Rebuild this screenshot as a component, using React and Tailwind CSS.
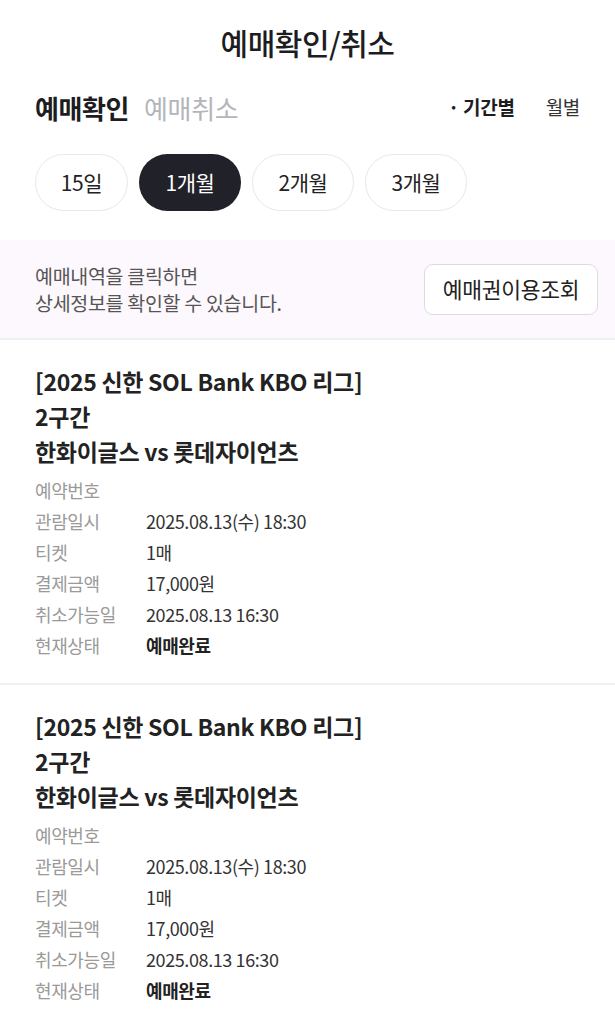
import React from 'react';

const periods = ['15일', '1개월', '2개월', '3개월'];

const tickets = [
  {
    id: 1,
    title: ['[2025 신한 SOL Bank KBO 리그]', '2구간', '한화이글스 vs 롯데자이언츠'],
    date: '2025.08.13(수) 18:30',
    count: '1매',
    price: '17,000원',
    cancelUntil: '2025.08.13 16:30',
    status: '예매완료',
  },
  {
    id: 2,
    title: ['[2025 신한 SOL Bank KBO 리그]', '2구간', '한화이글스 vs 롯데자이언츠'],
    date: '2025.08.13(수) 18:30',
    count: '1매',
    price: '17,000원',
    cancelUntil: '2025.08.13 16:30',
    status: '예매완료',
  },
];

const Row = ({ label, children }) => (
  <div className="flex h-[31px] items-center">
    <span className="w-[111px] shrink-0 text-[#9a9a9a]">{label}</span>
    <span className="text-[#333]">{children}</span>
  </div>
);

const TicketCard = ({ t }) => (
  <div className="px-[35px] pt-[24px] pb-[22px] border-b-2 border-[#f1f1f3]">
    <div className="text-[23px] font-semibold leading-[35px] text-[#222] tracking-[-0.3px]">
      {t.title.map((line) => (
        <div key={line}>{line}</div>
      ))}
    </div>
    <div className="mt-[6px] text-[18px] tracking-[-0.4px]">
      <Row label="예약번호"></Row>
      <Row label="관람일시">{t.date}</Row>
      <Row label="티켓">{t.count}</Row>
      <Row label="결제금액">{t.price}</Row>
      <Row label="취소가능일">{t.cancelUntil}</Row>
      <Row label="현재상태">
        <span className="font-bold text-[#222]">{t.status}</span>
      </Row>
    </div>
  </div>
);

export default function App() {
  const active = '1개월';

  return (
    <div className="w-[615px] min-h-[1024px] bg-white font-['Noto_Sans_CJK_KR',sans-serif] text-[#222]">
      <header className="h-[84px] flex items-center justify-center">
        <h1 className="text-[30px] font-medium tracking-[-0.5px] text-[#1d1d1f]">예매확인/취소</h1>
      </header>

      <div className="flex items-center justify-between pl-[35px] pr-[35px] h-[46px]">
        <div className="flex items-center gap-[15px] text-[26px] tracking-[-0.4px]">
          <span className="font-semibold text-[#1d1d1f]">예매확인</span>
          <span className="text-[#b3b5bb]">예매취소</span>
        </div>
        <div className="flex items-center gap-[31px] text-[19px] tracking-[-0.3px]">
          <span className="font-bold text-[#1d1d1f]">· 기간별</span>
          <span className="text-[#333]">월별</span>
        </div>
      </div>

      <div className="flex gap-[11px] px-[35px] pt-[24px] pb-[29px]">
        {periods.map((p) => (
          <button
            key={p}
            className={`h-[57px] rounded-full text-[21px] tracking-[-0.4px] ${
              p === active
                ? 'bg-[#212129] text-white'
                : 'bg-white text-[#222] border border-[#e8e8ea]'
            } ${p === '15일' ? 'w-[93px]' : 'w-[102px]'}`}
          >
            {p}
          </button>
        ))}
      </div>

      <div className="bg-[#fdf8fd] h-[100px] flex items-center justify-between pl-[35px] pr-[17px] border-b-2 border-[#f0eff2]">
        <p className="text-[19.5px] leading-[27px] text-[#555] tracking-[-0.3px]">
          예매내역을 클릭하면
          <br />
          상세정보를 확인할 수 있습니다.
        </p>
        <button className="h-[51px] w-[174px] rounded-[9px] border border-[#dcdcde] bg-white text-[21.5px] text-[#222] tracking-[-0.3px]">
          예매권이용조회
        </button>
      </div>

      {tickets.map((t) => (
        <TicketCard key={t.id} t={t} />
      ))}
    </div>
  );
}
